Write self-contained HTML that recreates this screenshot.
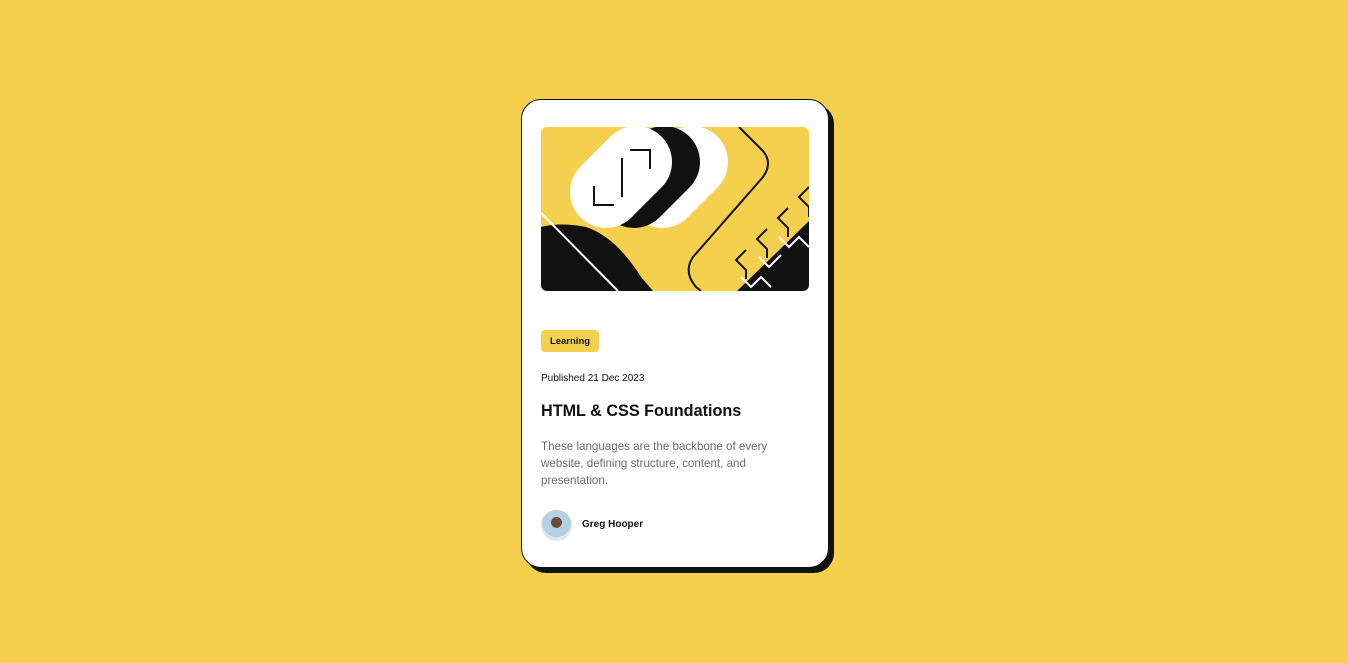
<!DOCTYPE html>
<html><head><meta charset="utf-8"><style>
body{margin:0;width:1348px;height:663px;background:#f4d04e;font-family:"Liberation Sans",sans-serif;position:relative;overflow:hidden}
.card{position:absolute;left:521px;top:99px;width:306px;height:467px;background:#fff;border:1px solid #111;border-radius:20px;box-shadow:5px 5px 0 #111}
.img{position:absolute;left:19px;top:27px;width:268px;height:164px;border-radius:6px;overflow:hidden;background:#f4d04e}
.tag{position:absolute;left:19px;top:230px;width:58px;height:22px;background:#f4d04e;border-radius:4px;font-size:9.5px;font-weight:bold;color:#111;line-height:23px;text-align:center}
.pub{position:absolute;left:19px;top:273px;font-size:10px;color:#111}
h1{position:absolute;left:19px;top:302px;margin:0;font-size:16.2px;font-weight:bold;color:#111}
p{position:absolute;left:19px;top:338px;margin:0;width:250px;font-size:11.6px;line-height:17px;color:#6b6b6b}
.av{position:absolute;left:19px;top:410px;width:31px;height:31px;border-radius:50%;background:radial-gradient(circle at 50% 40%,#6d4a3a 0 22%,#b5d0e0 23% 60%,#dde8ee 61%)}
.name{position:absolute;left:60px;top:419px;font-size:10px;font-weight:bold;color:#111}
</style></head><body>
<div class="card">
<div class="img"><svg width="268" height="164" viewBox="0 0 268 164">
<line x1="121" y1="65" x2="151" y2="35" stroke="#fff" stroke-width="72" stroke-linecap="round"/>
<line x1="93" y1="65" x2="123" y2="35" stroke="#111" stroke-width="72" stroke-linecap="round"/>
<line x1="65" y1="65" x2="95" y2="35" stroke="#fff" stroke-width="72" stroke-linecap="round"/>
<polyline points="89,23 109,23 109,42" fill="none" stroke="#111" stroke-width="2"/>
<line x1="81" y1="31" x2="81" y2="70" stroke="#111" stroke-width="2"/>
<polyline points="53,59 53,78 73,78" fill="none" stroke="#111" stroke-width="2"/>
<path d="M0,100 Q20,95 45,100 Q75,110 100,150 L112,164 L0,164Z" fill="#111"/>
<line x1="0" y1="86" x2="77" y2="164" stroke="#fff" stroke-width="2"/>
<path d="M198,0 L222,24 Q232,36 222,50 L152,130 Q142,145 155,160 L160,164" fill="none" stroke="#111" stroke-width="2"/>
<polygon points="268,94 268,164 196,164" fill="#111"/>
<g fill="none" stroke="#111" stroke-width="2">
<polyline points="268,60 258,70 268,80 268,90"/>
<polyline points="247,81 237,91 247,101 247,110"/>
<polyline points="226,102 216,112 226,122 226,131"/>
<polyline points="205,123 195,133 205,143 205,152"/>
</g>
<g fill="none" stroke="#fff" stroke-width="2">
<polyline points="238,110 248,120 258,110 268,120"/>
<polyline points="218,130 228,140 240,128"/>
<polyline points="200,150 210,160 220,150 230,160"/>
</g>
</svg></div>
<div class="tag">Learning</div>
<div class="pub">Published 21 Dec 2023</div>
<h1>HTML &amp; CSS Foundations</h1>
<p>These languages are the backbone of every website, defining structure, content, and presentation.</p>
<div class="av"></div>
<div class="name">Greg Hooper</div>
</div>
</body></html>
